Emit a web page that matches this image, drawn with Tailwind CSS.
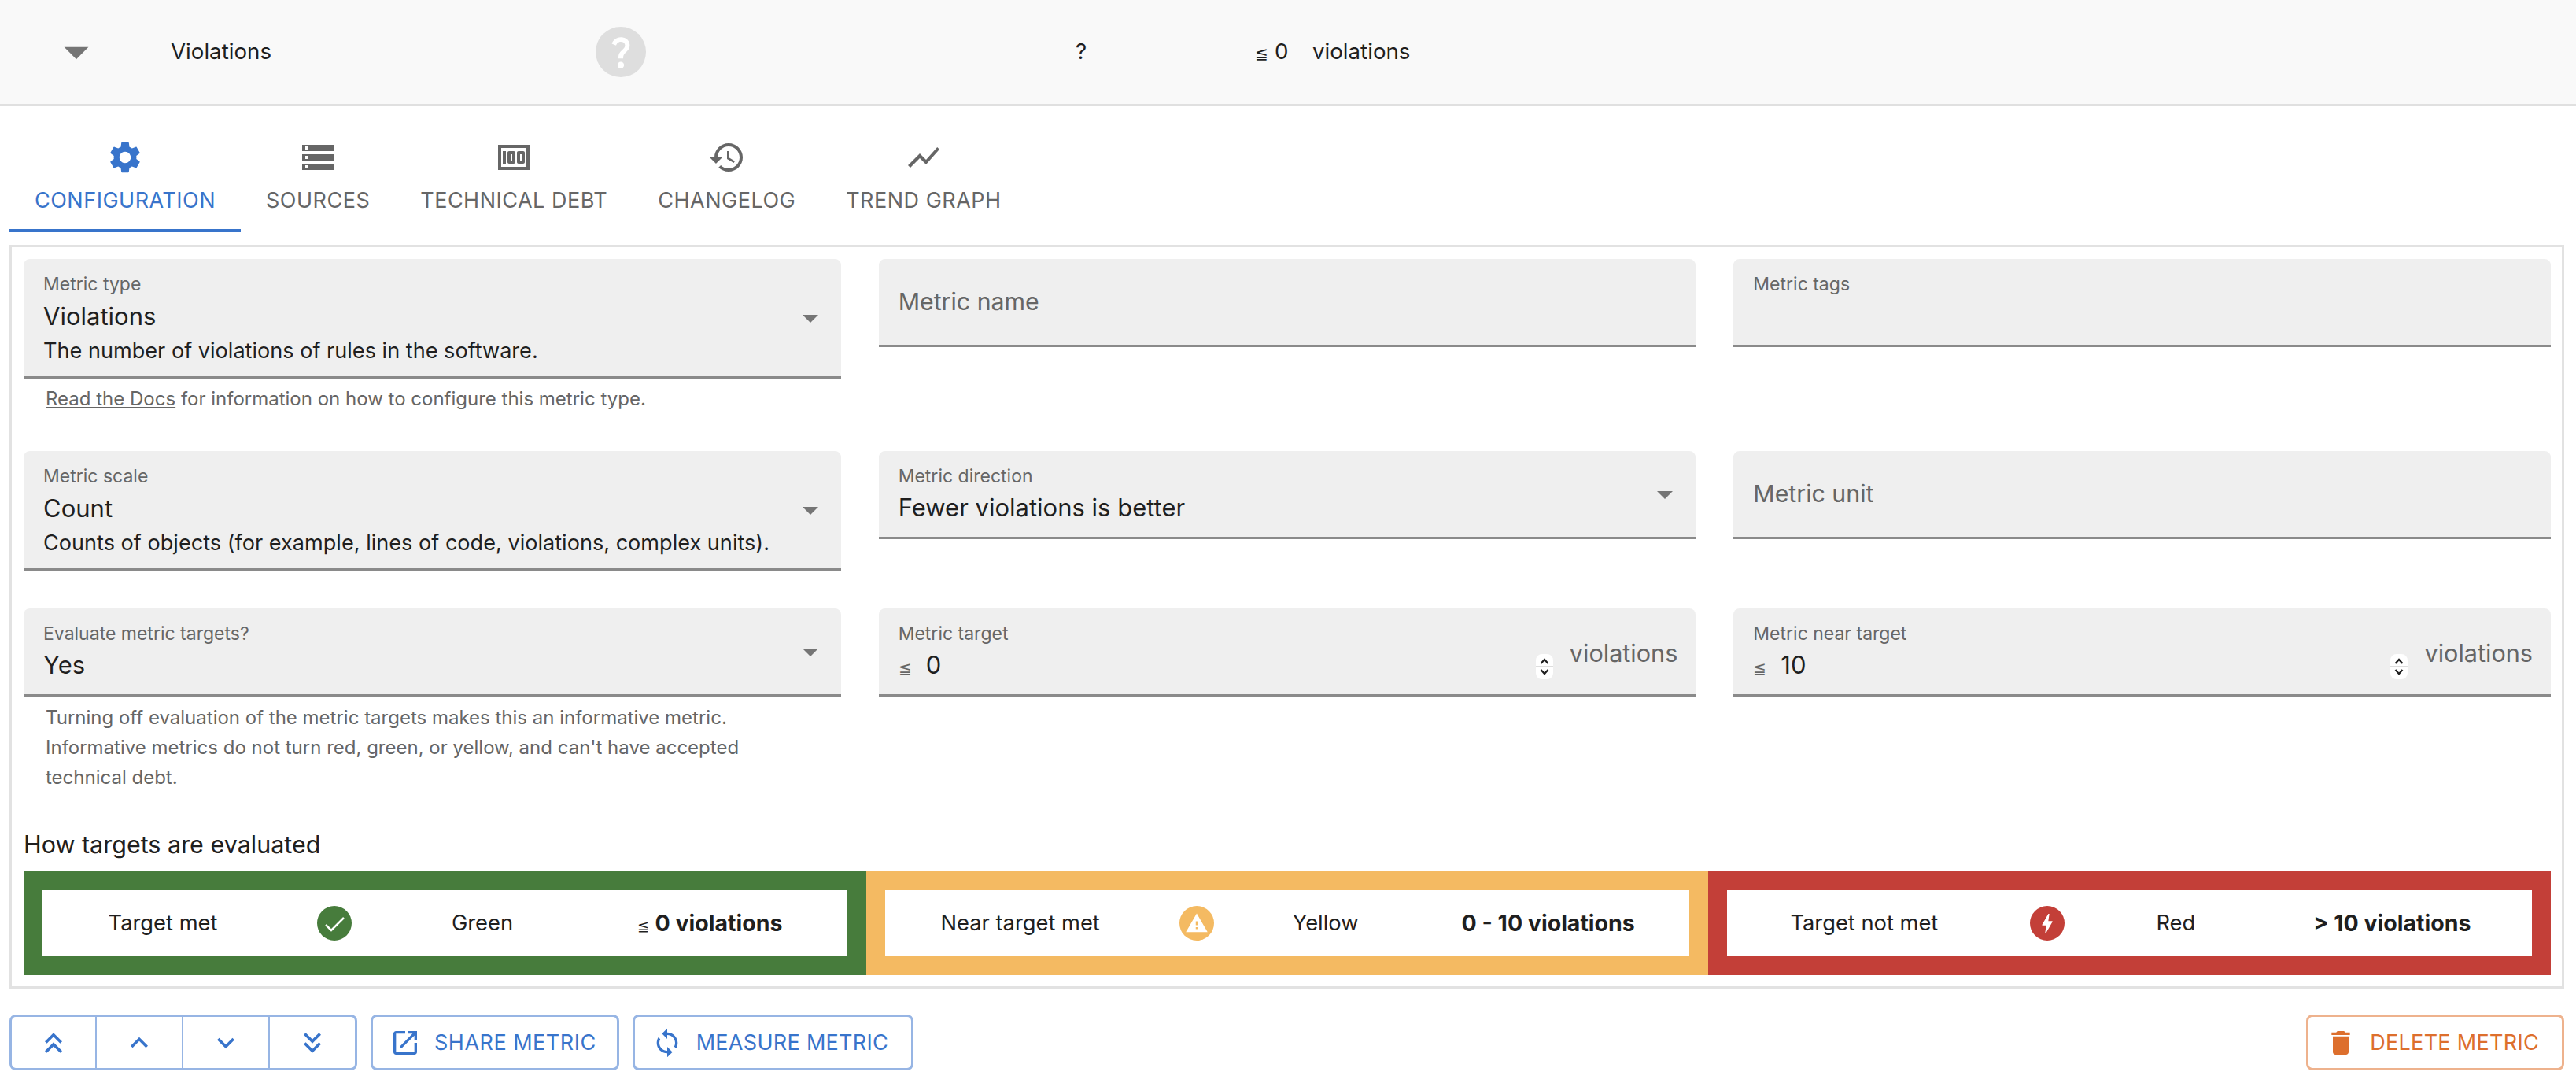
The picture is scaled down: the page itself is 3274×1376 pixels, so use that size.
<!DOCTYPE html>
<html lang="en">
<head>
    <meta charset="UTF-8">
    <title>Violations</title>
    <script src="https://cdn.jsdelivr.net/npm/@tailwindcss/browser@4"></script>
</head>
<body class="font-[family-name:Inter] bg-white text-[#1f1f1f] w-[3274px] h-[1376px] overflow-hidden">
    <!-- Metric row -->
    <div class="grid grid-cols-[217px_540px_610px_228px_73px_1fr] items-center h-[135px] bg-[#f9f9f9] border-b-[3px] border-[#e0e0e0] text-[27.7px]">
        <svg class="w-[74px] h-[74px] ml-[60px] text-[#757575]" viewBox="0 0 24 24" fill="currentColor"><path d="M7 10l5 5 5-5z"/></svg>
        <span>Violations</span>
        <span class="flex items-center justify-center w-16 h-16 rounded-full bg-[#dedede]">
            <svg class="w-[50px] h-[50px] text-white" viewBox="0 0 24 24" fill="currentColor"><path d="M11.07 12.85c.77-1.39 2.25-2.21 3.11-3.44.91-1.29.4-3.7-2.18-3.7-1.69 0-2.52 1.28-2.87 2.34L6.54 6.96C7.25 4.83 9.18 3 11.99 3c2.35 0 3.96 1.07 4.78 2.41.7 1.15 1.11 3.3.03 4.9-1.2 1.77-2.35 2.31-2.97 3.45-.25.46-.35.76-.35 2.24h-2.89c-.01-.78-.13-2.05.49-3.15zM14 20c0 1.1-.9 2-2 2s-2-.9-2-2 .9-2 2-2 2 .9 2 2z"/></svg>
        </span>
        <span>?</span>
        <span><span class="text-[20px] mr-2">≦</span>0</span>
        <span>violations</span>
    </div>

    <!-- Tabs -->
    <div class="flex pl-3 pt-[41px] text-[27px] text-[#666666] tracking-[0.5px]">
        <div class="flex flex-col items-center px-[32px] pb-[16px] border-b-4 border-[#3874cb] text-[#3874cb]">
            <svg class="w-12 h-12" viewBox="0 0 24 24" fill="currentColor"><path d="M19.14 12.94c.04-.3.06-.61.06-.94 0-.32-.02-.64-.07-.94l2.03-1.58c.18-.14.23-.41.12-.61l-1.92-3.32c-.12-.22-.37-.29-.59-.22l-2.39.96c-.5-.38-1.03-.7-1.62-.94l-.36-2.54c-.04-.24-.24-.41-.48-.41h-3.84c-.24 0-.43.17-.47.41l-.36 2.54c-.59.24-1.13.57-1.62.94l-2.39-.96c-.22-.08-.47 0-.59.22L2.74 8.87c-.12.21-.08.47.12.61l2.03 1.58c-.05.3-.09.63-.09.94s.02.64.07.94l-2.03 1.58c-.18.14-.23.41-.12.61l1.92 3.32c.12.22.37.29.59.22l2.39-.96c.5.38 1.03.7 1.62.94l.36 2.54c.05.24.24.41.48.41h3.84c.24 0 .44-.17.47-.41l.36-2.54c.59-.24 1.13-.56 1.62-.94l2.39.96c.22.08.47 0 .59-.22l1.92-3.32c.12-.22.07-.47-.12-.61l-2.01-1.58zM12 15.6c-1.98 0-3.6-1.62-3.6-3.6s1.62-3.6 3.6-3.6 3.6 1.62 3.6 3.6-1.62 3.6-3.6 3.6z"/></svg>
            <span class="mt-[11px] leading-[40px]">CONFIGURATION</span>
        </div>
        <div class="flex flex-col items-center px-[32px] pb-[16px] border-b-4 border-transparent">
            <svg class="w-12 h-12" viewBox="0 0 24 24" fill="currentColor"><path d="M2 20h20v-4H2v4zm2-3h2v2H4v-2zM2 4v4h20V4H2zm4 3H4V5h2v2zm-4 7h20v-4H2v4zm2-3h2v2H4v-2z"/></svg>
            <span class="mt-[11px] leading-[40px]">SOURCES</span>
        </div>
        <div class="flex flex-col items-center px-[32px] pb-[16px] border-b-4 border-transparent">
            <svg class="w-12 h-12" viewBox="0 0 24 24" fill="currentColor"><path d="M5 8h2v8H5zm7 0H9c-.55 0-1 .45-1 1v6c0 .55.45 1 1 1h3c.55 0 1-.45 1-1V9c0-.55-.45-1-1-1zm-1 6h-1v-4h1v4zm7-6h-3c-.55 0-1 .45-1 1v6c0 .55.45 1 1 1h3c.55 0 1-.45 1-1V9c0-.55-.45-1-1-1zm-1 6h-1v-4h1v4z"/><path d="M2 4v16h20V4H2zm2 14V6h16v12H4z"/></svg>
            <span class="mt-[11px] leading-[40px]">TECHNICAL DEBT</span>
        </div>
        <div class="flex flex-col items-center px-[32px] pb-[16px] border-b-4 border-transparent">
            <svg class="w-12 h-12" viewBox="0 0 24 24" fill="currentColor"><path d="M13 3c-4.97 0-9 4.03-9 9H1l3.89 3.89.07.14L9 12H6c0-3.87 3.13-7 7-7s7 3.13 7 7-3.13 7-7 7c-1.93 0-3.68-.79-4.94-2.06l-1.42 1.42C8.27 19.99 10.51 21 13 21c4.97 0 9-4.03 9-9s-4.03-9-9-9zm-1 5v5l4.28 2.54.72-1.21-3.5-2.08V8H12z"/></svg>
            <span class="mt-[11px] leading-[40px]">CHANGELOG</span>
        </div>
        <div class="flex flex-col items-center px-[32px] pb-[16px] border-b-4 border-transparent">
            <svg class="w-12 h-12" viewBox="0 0 24 24" fill="currentColor"><path d="M3.5 18.49l6-6.01 4 4L22 6.92l-1.41-1.41-7.09 7.97-4-4L2 16.99z"/></svg>
            <span class="mt-[11px] leading-[40px]">TREND GRAPH</span>
        </div>
    </div>

    <!-- Configuration panel -->
    <div class="ml-3 mt-4 w-[3247px] h-[945px] border-[3px] border-[#e2e2e2] pl-[15px] pr-[14px] pt-[15px]">
        <div class="grid grid-cols-3 gap-x-[48px] items-start h-[244px]">
            <div>
                <div class="flex items-center justify-between h-[152px] bg-[#efefef] rounded-t-lg border-b-[3px] border-[#8a8a8a] pl-[25px] pr-[15px]">
                    <div class="self-start pt-4">
                        <div class="text-[23px] text-[#666666] leading-[32px]">Metric type</div>
                        <div class="text-[31px] leading-[44px] mt-[3px]">Violations</div>
                        <div class="text-[27.1px] leading-[42px] mt-px">The number of violations of rules in the software.</div>
                    </div>
                    <svg class="w-12 h-12 text-[#757575]" viewBox="0 0 24 24" fill="currentColor"><path d="M7 10l5 5 5-5z"/></svg>
                </div>
                <p class="pl-[28px] mt-[7px] text-[24px] leading-[38px] text-[#666666]"><span class="underline">Read the Docs</span> for information on how to configure this metric type.</p>
            </div>
            <div class="flex items-center h-[112px] bg-[#efefef] rounded-t-lg border-b-[3px] border-[#8a8a8a] pl-[25px] text-[30.3px] text-[#666666]">Metric name</div>
            <div class="h-[112px] bg-[#efefef] rounded-t-lg border-b-[3px] border-[#8a8a8a] pl-[25px] pt-4 text-[23px] leading-[32px] text-[#666666]">Metric tags</div>
        </div>

        <div class="grid grid-cols-3 gap-x-[48px] items-start h-[200px]">
            <div class="flex items-center justify-between h-[152px] bg-[#efefef] rounded-t-lg border-b-[3px] border-[#8a8a8a] pl-[25px] pr-[15px]">
                <div class="self-start pt-4">
                    <div class="text-[23px] text-[#666666] leading-[32px]">Metric scale</div>
                    <div class="text-[31px] leading-[44px] mt-[3px]">Count</div>
                    <div class="text-[27.1px] leading-[42px] mt-px">Counts of objects (for example, lines of code, violations, complex units).</div>
                </div>
                <svg class="w-12 h-12 text-[#757575]" viewBox="0 0 24 24" fill="currentColor"><path d="M7 10l5 5 5-5z"/></svg>
            </div>
            <div class="flex items-center justify-between h-[112px] bg-[#efefef] rounded-t-lg border-b-[3px] border-[#8a8a8a] pl-[25px] pr-[15px]">
                <div class="self-start pt-4">
                    <div class="text-[23px] text-[#666666] leading-[32px]">Metric direction</div>
                    <div class="text-[31px] leading-[44px] mt-[2px]">Fewer violations is better</div>
                </div>
                <svg class="w-12 h-12 text-[#757575]" viewBox="0 0 24 24" fill="currentColor"><path d="M7 10l5 5 5-5z"/></svg>
            </div>
            <div class="flex items-center h-[112px] bg-[#efefef] rounded-t-lg border-b-[3px] border-[#8a8a8a] pl-[25px] text-[30.3px] text-[#666666]">Metric unit</div>
        </div>

        <div class="grid grid-cols-3 gap-x-[48px] items-start h-[278px]">
            <div>
                <div class="flex items-center justify-between h-[112px] bg-[#efefef] rounded-t-lg border-b-[3px] border-[#8a8a8a] pl-[25px] pr-[15px]">
                    <div class="self-start pt-4">
                        <div class="text-[23px] text-[#666666] leading-[32px]">Evaluate metric targets?</div>
                        <div class="text-[31px] leading-[44px] mt-[2px]">Yes</div>
                    </div>
                    <svg class="w-12 h-12 text-[#757575]" viewBox="0 0 24 24" fill="currentColor"><path d="M7 10l5 5 5-5z"/></svg>
                </div>
                <p class="pl-[28px] w-[960px] mt-2 text-[24px] leading-[38px] text-[#666666]">Turning off evaluation of the metric targets makes this an informative metric. Informative metrics do not turn red, green, or yellow, and can't have accepted technical debt.</p>
            </div>
            <div class="flex items-center h-[112px] bg-[#efefef] rounded-t-lg border-b-[3px] border-[#8a8a8a] pl-[25px] pr-[23px]">
                <div class="grow self-start pt-4">
                    <div class="text-[23px] text-[#666666] leading-[32px]">Metric target</div>
                    <div class="text-[31px] leading-[44px] mt-[2px]"><span class="text-[20px] text-[#666666] mr-[18px]">≦</span>0</div>
                </div>
                <svg class="w-[22px] h-8 mt-[38px] mr-[21px] rounded-lg bg-white" viewBox="0 0 22 32" fill="none" stroke="#1f1f1f" stroke-width="2.2"><path d="M6.500 12l4.500-5 4.500 5M6.500 20l4.500 5 4.500-5"/><path d="M0 16h22" stroke="#dddddd"/></svg>
                <span class="text-[30.6px] text-[#666666] mt-[5px]">violations</span>
            </div>
            <div class="flex items-center h-[112px] bg-[#efefef] rounded-t-lg border-b-[3px] border-[#8a8a8a] pl-[25px] pr-[23px]">
                <div class="grow self-start pt-4">
                    <div class="text-[23px] text-[#666666] leading-[32px]">Metric near target</div>
                    <div class="text-[31px] leading-[44px] mt-[2px]"><span class="text-[20px] text-[#666666] mr-[18px]">≦</span>10</div>
                </div>
                <svg class="w-[22px] h-8 mt-[38px] mr-[21px] rounded-lg bg-white" viewBox="0 0 22 32" fill="none" stroke="#1f1f1f" stroke-width="2.2"><path d="M6.500 12l4.500-5 4.500 5M6.500 20l4.500 5 4.500-5"/><path d="M0 16h22" stroke="#dddddd"/></svg>
                <span class="text-[30.6px] text-[#666666] mt-[5px]">violations</span>
            </div>
        </div>

        <h2 class="text-[30.5px] leading-[44px] mb-3">How targets are evaluated</h2>

        <!-- Legend -->
        <div class="grid grid-cols-3 text-[27.3px] h-[132px]">
            <div class="bg-[#477c3c] p-6">
                <div class="grid grid-cols-[306px_130px_246px_332px] items-center justify-items-center h-full bg-white">
                    <span>Target met</span>
                    <span class="flex items-center justify-center w-11 h-11 rounded-full bg-[#477c3c]">
                        <svg class="w-11 h-11" viewBox="0 0 44 44" fill="none" stroke="#ffffff" stroke-width="2.5"><path d="M11 24l7 7 16-16"/></svg>
                    </span>
                    <span>Green</span>
                    <span class="font-bold text-[28.5px]"><span class="text-[18px] font-normal mr-2">≦</span>0 violations</span>
                </div>
            </div>
            <div class="bg-[#f4ba62] p-6">
                <div class="grid grid-cols-[344px_104px_224px_342px] items-center justify-items-center h-full bg-white">
                    <span>Near target met</span>
                    <span class="flex items-center justify-center w-11 h-11 rounded-full bg-[#f4ba62]">
                        <svg class="w-[30px] h-[30px] text-white" viewBox="0 0 24 24" fill="currentColor"><path d="M1 21h22L12 2 1 21zm12-3h-2v-2h2v2zm0-4h-2v-4h2v4z"/></svg>
                    </span>
                    <span>Yellow</span>
                    <span class="font-bold text-[28.5px]">0 - 10 violations</span>
                </div>
            </div>
            <div class="bg-[#c33f38] p-6">
                <div class="grid grid-cols-[348px_118px_208px_342px] items-center justify-items-center h-full bg-white">
                    <span>Target not met</span>
                    <span class="flex items-center justify-center w-11 h-11 rounded-full bg-[#c33f38]">
                        <svg class="w-[32px] h-[32px] text-white" viewBox="0 0 24 24" fill="currentColor"><path d="M11 21h-1l1-7H7.500c-.58 0-.57-.32-.38-.66.19-.34.05-.08.07-.12C8.480 10.940 10.420 7.540 13 3h1l-1 7h3.500c.49 0 .56.33.47.51l-.07.15C12.960 17.550 11 21 11 21z"/></svg>
                    </span>
                    <span>Red</span>
                    <span class="font-bold text-[28.5px]">&gt; 10 violations</span>
                </div>
            </div>
        </div>
    </div>

    <!-- Actions -->
    <div class="flex items-center justify-between pl-3 w-[3259px] mt-[33px] text-[27px] text-[#3874cb] tracking-[0.5px]">
        <div class="flex gap-[17px]">
            <div class="flex h-[71px] border-[3px] border-[#97b5e4] rounded-lg divide-x-2 divide-[#97b5e4]">
                <span class="flex items-center justify-center w-[108px]"><svg class="w-11 h-11" viewBox="0 0 24 24" fill="currentColor"><path d="M6 17.59 7.41 19 12 14.42 16.59 19 18 17.59l-6-6z"/><path d="m6 11 1.41 1.41L12 7.83l4.59 4.58L18 11l-6-6z"/></svg></span>
                <span class="flex items-center justify-center w-[110px]"><svg class="w-11 h-11" viewBox="0 0 24 24" fill="currentColor"><path d="M7.41 15.41 12 10.83l4.59 4.58L18 14l-6-6-6 6z"/></svg></span>
                <span class="flex items-center justify-center w-[110px]"><svg class="w-11 h-11" viewBox="0 0 24 24" fill="currentColor"><path d="M7.41 8.59 12 13.17l4.59-4.58L18 10l-6 6-6-6 1.41-1.41z"/></svg></span>
                <span class="flex items-center justify-center w-[108px]"><svg class="w-11 h-11" viewBox="0 0 24 24" fill="currentColor"><path d="M18 6.41 16.59 5 12 9.58 7.41 5 6 6.41l6 6z"/><path d="m18 13-1.41-1.41L12 16.170l-4.590-4.580L6 13l6 6z"/></svg></span>
            </div>
            <div class="flex items-center gap-[17px] h-[71px] pl-[21px] pr-[26px] border-[3px] border-[#97b5e4] rounded-lg">
                <svg class="w-10 h-10" viewBox="0 0 24 24" fill="currentColor"><path d="M19 19H5V5h7V3H5c-1.11 0-2 .9-2 2v14c0 1.1.89 2 2 2h14c1.1 0 2-.9 2-2v-7h-2v7zM14 3v2h3.59l-9.83 9.83 1.41 1.41L19 6.41V10h2V3h-7z"/></svg>
                <span class="mt-px">SHARE METRIC</span>
            </div>
            <div class="flex items-center gap-[17px] h-[71px] pl-[21px] pr-[29px] border-[3px] border-[#97b5e4] rounded-lg">
                <svg class="w-10 h-10" viewBox="0 0 24 24" fill="currentColor"><path d="M12 4V1L8 5l4 4V6c3.31 0 6 2.69 6 6 0 1.01-.25 1.97-.7 2.8l1.46 1.46C19.54 15.03 20 13.57 20 12c0-4.42-3.58-8-8-8zm0 14c-3.31 0-6-2.69-6-6 0-1.01.25-1.97.7-2.8L5.24 7.74C4.46 8.97 4 10.43 4 12c0 4.42 3.58 8 8 8v3l4-4-4-4v3z"/></svg>
                <span class="mt-px tracking-[0.3px]">MEASURE METRIC</span>
            </div>
        </div>
        <div class="flex items-center gap-[17px] h-[71px] pl-[21px] pr-[29px] border-[3px] border-[#eeb28d] rounded-lg text-[#dd6f2d]">
            <svg class="w-10 h-10" viewBox="0 0 24 24" fill="currentColor"><path d="M6 19c0 1.1.9 2 2 2h8c1.1 0 2-.9 2-2V7H6v12zM19 4h-3.5l-1-1h-5l-1 1H5v2h14V4z"/></svg>
            <span class="mt-px tracking-[0.3px]">DELETE METRIC</span>
        </div>
    </div>
</body>
</html>
